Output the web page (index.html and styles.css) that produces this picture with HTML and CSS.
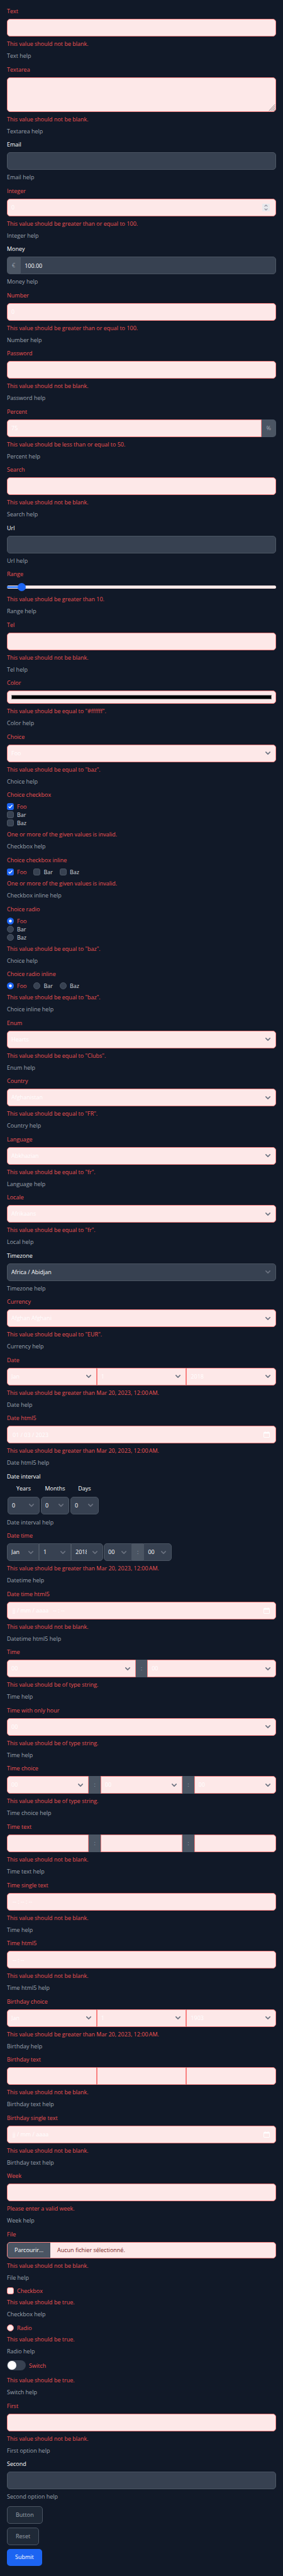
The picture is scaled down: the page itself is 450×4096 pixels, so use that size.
FILE: index.html
```html
<!DOCTYPE html>
<html lang="en">
<head>
<meta charset="utf-8">
<meta name="viewport" content="width=device-width, initial-scale=1">
<title>Form</title>
<link rel="stylesheet" href="styles.css">
</head>
<body>
<form class="form" novalidate>
  <div class="field invalid">
    <label class="label" for="text">Text</label>
    <input class="control" type="text" id="text">
    <p class="error">This value should not be blank.</p>
    <p class="help">Text help</p>
  </div>
  <div class="field invalid">
    <label class="label" for="textarea">Textarea</label>
    <textarea class="control textarea" id="textarea"></textarea>
    <p class="error">This value should not be blank.</p>
    <p class="help">Textarea help</p>
  </div>
  <div class="field">
    <label class="label" for="email">Email</label>
    <input class="control" type="email" id="email">
    <p class="help">Email help</p>
  </div>
  <div class="field invalid">
    <label class="label" for="integer">Integer</label>
    <input class="control spinner" type="number" id="integer" value="0">
    <p class="error">This value should be greater than or equal to 100.</p>
    <p class="help">Integer help</p>
  </div>
  <div class="field">
    <label class="label" for="money">Money</label>
    <div class="joined">
      <span class="addon">€</span>
      <input class="control" type="text" id="money" value="100.00">
    </div>
    <p class="help">Money help</p>
  </div>
  <div class="field invalid">
    <label class="label" for="number">Number</label>
    <input class="control" type="text" id="number" value="0">
    <p class="error">This value should be greater than or equal to 100.</p>
    <p class="help">Number help</p>
  </div>
  <div class="field invalid">
    <label class="label" for="password">Password</label>
    <input class="control" type="password" id="password">
    <p class="error">This value should not be blank.</p>
    <p class="help">Password help</p>
  </div>
  <div class="field invalid">
    <label class="label" for="percent">Percent</label>
    <div class="joined">
      <input class="control" type="text" id="percent" value="75">
      <span class="addon">%</span>
    </div>
    <p class="error">This value should be less than or equal to 50.</p>
    <p class="help">Percent help</p>
  </div>
  <div class="field invalid">
    <label class="label" for="search">Search</label>
    <input class="control" type="search" id="search">
    <p class="error">This value should not be blank.</p>
    <p class="help">Search help</p>
  </div>
  <div class="field">
    <label class="label" for="url">Url</label>
    <input class="control" type="url" id="url">
    <p class="help">Url help</p>
  </div>
  <div class="field invalid">
    <label class="label" for="range">Range</label>
    <input class="range" type="range" id="range" min="0" max="100" value="4">
    <p class="error">This value should be greater than 10.</p>
    <p class="help">Range help</p>
  </div>
  <div class="field invalid">
    <label class="label" for="tel">Tel</label>
    <input class="control" type="tel" id="tel">
    <p class="error">This value should not be blank.</p>
    <p class="help">Tel help</p>
  </div>
  <div class="field invalid">
    <label class="label" for="color">Color</label>
    <input class="control color" type="color" id="color" value="#000000">
    <p class="error">This value should be equal to "#ffffff".</p>
    <p class="help">Color help</p>
  </div>
  <div class="field invalid">
    <label class="label" for="choice">Choice</label>
    <select class="control select" id="choice"><option>Foo</option><option>Bar</option><option>Baz</option></select>
    <p class="error">This value should be equal to "baz".</p>
    <p class="help">Choice help</p>
  </div>
  <div class="field invalid" role="group" aria-labelledby="cc">
    <span class="label" id="cc">Choice checkbox</span>
    <div class="options">
      <label class="option picked"><input class="check" type="checkbox" checked>Foo</label>
      <label class="option"><input class="check" type="checkbox">Bar</label>
      <label class="option"><input class="check" type="checkbox">Baz</label>
    </div>
    <p class="error">One or more of the given values is invalid.</p>
    <p class="help">Checkbox help</p>
  </div>
  <div class="field invalid" role="group" aria-labelledby="cci">
    <span class="label" id="cci">Choice checkbox inline</span>
    <div class="options inline">
      <label class="option picked"><input class="check" type="checkbox" checked>Foo</label>
      <label class="option"><input class="check" type="checkbox">Bar</label>
      <label class="option"><input class="check" type="checkbox">Baz</label>
    </div>
    <p class="error">One or more of the given values is invalid.</p>
    <p class="help">Checkbox inline help</p>
  </div>
  <div class="field invalid" role="group" aria-labelledby="cr">
    <span class="label" id="cr">Choice radio</span>
    <div class="options">
      <label class="option picked"><input class="check radio" type="radio" name="r1" checked>Foo</label>
      <label class="option"><input class="check radio" type="radio" name="r1">Bar</label>
      <label class="option"><input class="check radio" type="radio" name="r1">Baz</label>
    </div>
    <p class="error">This value should be equal to "baz".</p>
    <p class="help">Choice help</p>
  </div>
  <div class="field invalid" role="group" aria-labelledby="cri">
    <span class="label" id="cri">Choice radio inline</span>
    <div class="options inline">
      <label class="option picked"><input class="check radio" type="radio" name="r2" checked>Foo</label>
      <label class="option"><input class="check radio" type="radio" name="r2">Bar</label>
      <label class="option"><input class="check radio" type="radio" name="r2">Baz</label>
    </div>
    <p class="error">This value should be equal to "baz".</p>
    <p class="help">Choice inline help</p>
  </div>
  <div class="field invalid">
    <label class="label" for="enum">Enum</label>
    <select class="control select" id="enum"><option>Hearts</option><option>Clubs</option></select>
    <p class="error">This value should be equal to "Clubs".</p>
    <p class="help">Enum help</p>
  </div>
  <div class="field invalid">
    <label class="label" for="country">Country</label>
    <select class="control select" id="country"><option>Afghanistan</option></select>
    <p class="error">This value should be equal to "FR".</p>
    <p class="help">Country help</p>
  </div>
  <div class="field invalid">
    <label class="label" for="language">Language</label>
    <select class="control select" id="language"><option>Abkhazian</option></select>
    <p class="error">This value should be equal to "fr".</p>
    <p class="help">Language help</p>
  </div>
  <div class="field invalid">
    <label class="label" for="locale">Locale</label>
    <select class="control select" id="locale"><option>Afrikaans</option></select>
    <p class="error">This value should be equal to "fr".</p>
    <p class="help">Local help</p>
  </div>
  <div class="field">
    <label class="label" for="timezone">Timezone</label>
    <select class="control select" id="timezone"><option>Africa / Abidjan</option></select>
    <p class="help">Timezone help</p>
  </div>
  <div class="field invalid">
    <label class="label" for="currency">Currency</label>
    <select class="control select" id="currency"><option>Afghan Afghani</option></select>
    <p class="error">This value should be equal to "EUR".</p>
    <p class="help">Currency help</p>
  </div>
  <div class="field invalid" role="group" aria-labelledby="date">
    <span class="label" id="date">Date</span>
    <div class="joined">
      <select class="control select" aria-label="Month"><option>Jan</option></select>
      <select class="control select" aria-label="Day"><option>1</option></select>
      <select class="control select" aria-label="Year"><option>2018</option></select>
    </div>
    <p class="error">This value should be greater than Mar 20, 2023, 12:00&#8239;AM.</p>
    <p class="help">Date help</p>
  </div>
  <div class="field invalid">
    <label class="label" for="date5">Date html5</label>
    <input class="control masked calendar" type="text" id="date5" value="01 / 03 / 2023">
    <p class="error">This value should be greater than Mar 20, 2023, 12:00&#8239;AM.</p>
    <p class="help">Date html5 help</p>
  </div>
  <div class="field" role="group" aria-labelledby="interval">
    <span class="label" id="interval">Date interval</span>
    <table class="interval">
      <thead>
        <tr><th><label for="iy">Years</label></th><th><label for="im">Months</label></th><th><label for="id">Days</label></th></tr>
      </thead>
      <tbody>
        <tr>
          <td><select class="control select medium" id="iy"><option>0</option></select></td>
          <td><select class="control select small" id="im"><option>0</option></select></td>
          <td><select class="control select small" id="id"><option>0</option></select></td>
        </tr>
      </tbody>
    </table>
    <p class="help">Date interval help</p>
  </div>
  <div class="field" role="group" aria-labelledby="datetime">
    <span class="label invalid-label" id="datetime">Date time</span>
    <div class="datetime">
      <div class="joined">
        <select class="control select medium" aria-label="Month"><option>Jan</option></select>
        <select class="control select medium" aria-label="Day"><option>1</option></select>
        <select class="control select medium" aria-label="Year"><option>2018</option></select>
      </div>
      <div class="joined">
        <select class="control select small" aria-label="Hour"><option>00</option></select>
        <span class="addon">:</span>
        <select class="control select small" aria-label="Minute"><option>00</option></select>
      </div>
    </div>
    <p class="error">This value should be greater than Mar 20, 2023, 12:00&#8239;AM.</p>
    <p class="help">Datetime help</p>
  </div>
  <div class="field invalid">
    <label class="label" for="datetime5">Date time html5</label>
    <input class="control masked calendar" type="text" id="datetime5" value="jj / mm / aaaa &nbsp; -- : --">
    <p class="error">This value should not be blank.</p>
    <p class="help">Datetime html5 help</p>
  </div>
  <div class="field invalid" role="group" aria-labelledby="time">
    <span class="label" id="time">Time</span>
    <div class="joined">
      <select class="control select" aria-label="Hour"><option>00</option></select>
      <span class="addon">:</span>
      <select class="control select" aria-label="Minute"><option>00</option></select>
    </div>
    <p class="error">This value should be of type string.</p>
    <p class="help">Time help</p>
  </div>
  <div class="field invalid">
    <label class="label" for="hour">Time with only hour</label>
    <select class="control select" id="hour"><option>00</option></select>
    <p class="error">This value should be of type string.</p>
    <p class="help">Time help</p>
  </div>
  <div class="field invalid" role="group" aria-labelledby="timechoice">
    <span class="label" id="timechoice">Time choice</span>
    <div class="joined">
      <select class="control select" aria-label="Hour"><option>00</option></select>
      <span class="addon">:</span>
      <select class="control select" aria-label="Minute"><option>00</option></select>
      <span class="addon">:</span>
      <select class="control select" aria-label="Second"><option>00</option></select>
    </div>
    <p class="error">This value should be of type string.</p>
    <p class="help">Time choice help</p>
  </div>
  <div class="field invalid" role="group" aria-labelledby="timetext">
    <span class="label" id="timetext">Time text</span>
    <div class="joined">
      <input class="control" type="text" aria-label="Hour">
      <span class="addon">:</span>
      <input class="control" type="text" aria-label="Minute">
      <span class="addon">:</span>
      <input class="control" type="text" aria-label="Second">
    </div>
    <p class="error">This value should not be blank.</p>
    <p class="help">Time text help</p>
  </div>
  <div class="field invalid">
    <label class="label" for="timesingle">Time single text</label>
    <input class="control masked" type="text" id="timesingle" value="-- : -- : --">
    <p class="error">This value should not be blank.</p>
    <p class="help">Time help</p>
  </div>
  <div class="field invalid">
    <label class="label" for="time5">Time html5</label>
    <input class="control masked" type="text" id="time5" value="-- : --">
    <p class="error">This value should not be blank.</p>
    <p class="help">Time html5 help</p>
  </div>
  <div class="field invalid" role="group" aria-labelledby="bchoice">
    <span class="label" id="bchoice">Birthday choice</span>
    <div class="joined">
      <select class="control select" aria-label="Month"><option>Jan</option></select>
      <select class="control select" aria-label="Day"><option>1</option></select>
      <select class="control select" aria-label="Year"><option>1903</option></select>
    </div>
    <p class="error">This value should be greater than Mar 20, 2023, 12:00&#8239;AM.</p>
    <p class="help">Birthday help</p>
  </div>
  <div class="field invalid" role="group" aria-labelledby="btext">
    <span class="label" id="btext">Birthday text</span>
    <div class="joined">
      <input class="control" type="text" aria-label="Month">
      <input class="control" type="text" aria-label="Day">
      <input class="control" type="text" aria-label="Year">
    </div>
    <p class="error">This value should not be blank.</p>
    <p class="help">Birthday text help</p>
  </div>
  <div class="field invalid">
    <label class="label" for="bsingle">Birthday single text</label>
    <input class="control masked calendar" type="text" id="bsingle" value="jj / mm / aaaa">
    <p class="error">This value should not be blank.</p>
    <p class="help">Birthday text help</p>
  </div>
  <div class="field invalid">
    <label class="label" for="week">Week</label>
    <input class="control" type="text" id="week">
    <p class="error">Please enter a valid week.</p>
    <p class="help">Week help</p>
  </div>
  <div class="field invalid">
    <label class="label" for="file">File</label>
    <label class="file">
      <input class="file-input" type="file" id="file">
      <span class="file-button">Parcourir...</span>
      <span class="file-name">Aucun fichier sélectionné.</span>
    </label>
    <p class="error">This value should not be blank.</p>
    <p class="help">File help</p>
  </div>
  <div class="field invalid">
    <label class="option picked"><input class="check" type="checkbox">Checkbox</label>
    <p class="error">This value should be true.</p>
    <p class="help">Checkbox help</p>
  </div>
  <div class="field invalid">
    <label class="option picked"><input class="check radio" type="radio">Radio</label>
    <p class="error">This value should be true.</p>
    <p class="help">Radio help</p>
  </div>
  <div class="field invalid">
    <label class="option picked switch-row"><input class="switch" type="checkbox" role="switch">Switch</label>
    <p class="error">This value should be true.</p>
    <p class="help">Switch help</p>
  </div>
  <div class="field invalid">
    <label class="label" for="first">First</label>
    <input class="control" type="text" id="first">
    <p class="error">This value should not be blank.</p>
    <p class="help">First option help</p>
  </div>
  <div class="field">
    <label class="label" for="second">Second</label>
    <input class="control" type="text" id="second">
    <p class="help">Second option help</p>
  </div>
  <div class="actions">
    <button class="button" type="button">Button</button>
    <button class="button" type="reset">Reset</button>
    <button class="button primary" type="submit">Submit</button>
  </div>
</form>
</body>
</html>
```
FILE: styles.css
```css
:root {
  --bg: #111928;
  --gray-400: #9ca3af;
  --gray-600: #4b5563;
  --gray-700: #374151;
  --gray-800: #1f2937;
  --red-100: #fde8e8;
  --red-400: #f98080;
  --red-500: #f05252;
  --red-900: #771d1d;
  --blue-600: #1c64f2;
  --blue-500: #3f83f8;
  --radius: 5px;
}

*, *::before, *::after { box-sizing: border-box; }

body {
  margin: 0;
  background: var(--bg);
  color: #fff;
  font-family: "Open Sans", "Noto Sans", sans-serif;
  font-size: 9px;
  line-height: 14px;
}

/* Spare height of the window is shared between the fields. */
.form {
  display: flex;
  flex-direction: column;
  justify-content: space-between;
  gap: 7px;
  min-height: 100vh;
  padding: 11px 11px 16px;
}

.field {
  display: flex;
  flex-direction: column;
  gap: 5px;
}

.label { color: #fff; }
.invalid .label, .invalid-label, .error { color: var(--red-500); }
.error, .help { margin: 0; }
.help { color: var(--gray-400); }

.control {
  display: block;
  width: 100%;
  min-width: 0;
  height: 28px;
  margin: 0;
  padding: 0 6px;
  border: 1px solid var(--gray-600);
  border-radius: var(--radius);
  background-color: var(--gray-700);
  background-repeat: no-repeat;
  color: #fff;
  font: inherit;
  appearance: none;
}
.invalid .control {
  border-color: var(--red-400);
  background-color: var(--red-100);
}

.textarea {
  height: 55px;
  resize: none;
  background-position: right 0 bottom 0;
  background-size: 11px 11px;
  background-image: url("data:image/svg+xml,%3Csvg xmlns='http://www.w3.org/2000/svg' viewBox='0 0 16 16' fill='none' stroke='%23857b7d' stroke-width='1.3'%3E%3Cpath d='M1 15 15 0M5 15 15 4M9 15l6-7M12.500 15 15 12'/%3E%3C/svg%3E");
}

.spinner {
  appearance: textfield;
  background-position: right 10px center;
  background-position: right 9px center;
  background-size: 12px 12px;
  background-image: url("data:image/svg+xml,%3Csvg xmlns='http://www.w3.org/2000/svg' viewBox='0 0 18 18' fill='none' stroke='%238f8f9d' stroke-width='1.8'%3E%3Cpath fill='%23e9e9ed' stroke='none' d='M0 0h18v18H0z'/%3E%3Cpath d='M5.500 6.500 9 3.200l3.500 3.300M5.500 11.500 9 14.800l3.500-3.300'/%3E%3C/svg%3E");
}
.spinner::-webkit-inner-spin-button { appearance: none; margin: 0; }

.select {
  padding-right: 25px;
  background-position: right 8px center;
  background-size: 8px 5px;
  background-image: url("data:image/svg+xml,%3Csvg xmlns='http://www.w3.org/2000/svg' viewBox='0 0 10 6' fill='none' stroke='%236b7280' stroke-width='2' stroke-linecap='round' stroke-linejoin='round'%3E%3Cpath d='m1 1 4 4 4-4'/%3E%3C/svg%3E");
}

.masked { padding-left: 8px; }
.calendar {
  background-position: right 9px center;
  background-size: 10px 10px;
  background-image: url("data:image/svg+xml,%3Csvg xmlns='http://www.w3.org/2000/svg' viewBox='0 0 14 14'%3E%3Cpath fill='%23fff' fill-rule='evenodd' d='M3 0h1.500v1.500h5V0H11v1.500h1a2 2 0 0 1 2 2V12a2 2 0 0 1-2 2H2a2 2 0 0 1-2-2V3.500a2 2 0 0 1 2-2h1zM1.300 5v7a.7.7 0 0 0 .7.7h10a.7.7 0 0 0 .7-.7V5z'/%3E%3C/svg%3E");
}

/* Controls and addons that share one rounded outline */
.joined { display: flex; }
.joined > .control { flex: 1; border-radius: 0; }
.joined > .control.medium, .joined > .control.small { flex: none; }
.joined > :first-child { border-radius: var(--radius) 0 0 var(--radius); }
.joined > :last-child { border-radius: 0 var(--radius) var(--radius) 0; }
.addon + .control:not(:only-child) { border-left-color: var(--gray-600); }
.invalid .addon + .control { border-left-color: var(--red-400); }
.addon {
  display: flex;
  align-items: center;
  padding: 0 8px;
  background: var(--gray-600);
  color: var(--gray-400);
}
.medium { width: 51px; }
.small { width: 45px; }
.datetime { display: flex; gap: 1px; }

.color { height: 21px; padding: 6px; }
.color::-webkit-color-swatch-wrapper { padding: 0; }
.color::-webkit-color-swatch { border: 1px solid #808080; border-radius: 0; }

.range {
  display: block;
  width: 100%;
  height: 16px;
  margin: 0;
  background: none;
  appearance: none;
}
.range::-webkit-slider-runnable-track {
  height: 5px;
  border-radius: 3px;
  background: linear-gradient(var(--blue-500), var(--blue-500)) left center / 5% 3px no-repeat, var(--red-100);
}
.range::-webkit-slider-thumb {
  width: 13px;
  height: 13px;
  margin-top: -4px;
  border-radius: 50%;
  background: var(--blue-600);
  appearance: none;
}

.options { display: flex; flex-direction: column; }
.options.inline { flex-direction: row; gap: 11px; }
.option {
  display: flex;
  align-items: center;
  gap: 5px;
  line-height: 13px;
  color: #d1d5db;
}
.option.picked { color: var(--red-500); }

.check {
  flex: none;
  width: 11px;
  height: 11px;
  margin: 0;
  border: 1px solid var(--gray-600);
  border-radius: 3px;
  background: var(--gray-700) center / 100% 100% no-repeat;
  appearance: none;
}
.radio { border-radius: 50%; }
.field.invalid > .option > .check {
  border-color: var(--red-400);
  background-color: var(--red-100);
}
.check:checked {
  border: 0;
  background-color: var(--blue-600);
  background-image: url("data:image/svg+xml,%3Csvg xmlns='http://www.w3.org/2000/svg' viewBox='0 0 16 16' fill='none' stroke='%23fff' stroke-width='2' stroke-linecap='round' stroke-linejoin='round'%3E%3Cpath d='m4.500 8.500 2.200 2.500L12 5'/%3E%3C/svg%3E");
}
.radio:checked {
  background-image: url("data:image/svg+xml,%3Csvg xmlns='http://www.w3.org/2000/svg' viewBox='0 0 16 16'%3E%3Ccircle cx='8' cy='8' r='3.200' fill='%23fff'/%3E%3C/svg%3E");
}

.switch-row { padding-bottom: 4px; }
.switch {
  flex: none;
  width: 30px;
  height: 16px;
  margin: 0;
  padding: 1px;
  border-radius: 8px;
  background: var(--gray-700);
  appearance: none;
}
.switch::before {
  content: "";
  display: block;
  width: 14px;
  height: 14px;
  border-radius: 50%;
  background: #fff;
}
.switch:checked::before { margin-left: auto; }

.interval { align-self: flex-start; border-spacing: 0; }
.interval th { padding: 0 0 6px; font-weight: 400; }
.interval td { padding: 0 1px 1px; }

.file {
  display: flex;
  height: 26px;
  overflow: hidden;
  border: 1px solid var(--red-400);
  border-radius: var(--radius);
  background: var(--red-100);
  line-height: 24px;
}
.file-input {
  position: absolute;
  width: 1px;
  height: 1px;
  opacity: 0;
}
.file-button { padding: 0 11px; background: var(--gray-600); }
.file-name { padding: 0 11px; color: var(--red-900); }

.actions {
  display: flex;
  flex-direction: column;
  align-items: flex-start;
  gap: 6px;
}
.button {
  height: 28px;
  padding: 0 13px;
  border: 1px solid var(--gray-600);
  border-radius: var(--radius);
  background: var(--gray-800);
  color: var(--gray-400);
  font: inherit;
}
.primary {
  height: 27px;
  border: 0;
  background: var(--blue-600);
  color: #fff;
}
```
